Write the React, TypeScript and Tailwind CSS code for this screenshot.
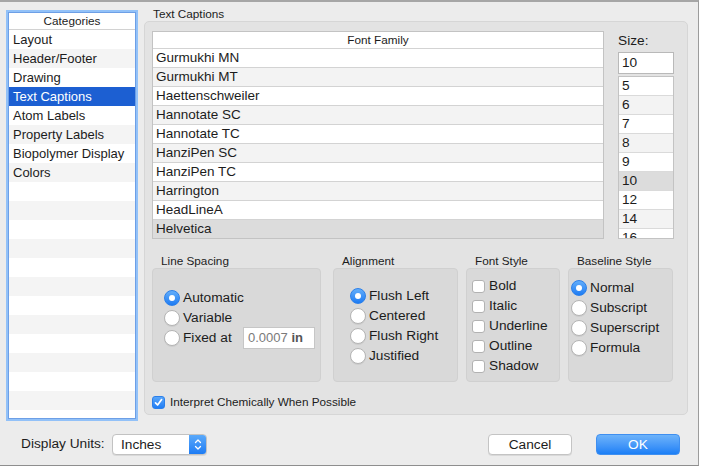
import React from 'react';

const CATEGORIES = [
  'Layout',
  'Header/Footer',
  'Drawing',
  'Text Captions',
  'Atom Labels',
  'Property Labels',
  'Biopolymer Display',
  'Colors',
];

const FONTS = [
  'Gurmukhi MN',
  'Gurmukhi MT',
  'Haettenschweiler',
  'Hannotate SC',
  'Hannotate TC',
  'HanziPen SC',
  'HanziPen TC',
  'Harrington',
  'HeadLineA',
  'Helvetica',
];

const SIZES = ['5', '6', '7', '8', '9', '10', '12', '14', '16'];

function Radio({ on }: { on?: boolean }) {
  if (on) {
    return (
      <span className="w-[16px] h-[16px] shrink-0 rounded-full bg-linear-to-b from-[#62aefa] to-[#1b7bf3] border border-[#2c80ea] flex items-center justify-center">
        <span className="w-[6px] h-[6px] rounded-full bg-white" />
      </span>
    );
  }
  return (
    <span className="w-[16px] h-[16px] shrink-0 rounded-full bg-white border border-[#b4b4b4] shadow-[0_1px_0_rgba(0,0,0,0.06)]" />
  );
}

function Check({ on }: { on?: boolean }) {
  if (on) {
    return (
      <span className="w-[13px] h-[13px] shrink-0 rounded-[3px] bg-linear-to-b from-[#58a6fa] to-[#1f7df4] border border-[#2b7fea] flex items-center justify-center">
        <svg width="9" height="9" viewBox="0 0 9 9">
          <path d="M1.5 4.8 L3.6 7 L7.6 1.6" fill="none" stroke="white" strokeWidth="1.7" strokeLinecap="round" strokeLinejoin="round" />
        </svg>
      </span>
    );
  }
  return <span className="w-[13px] h-[13px] shrink-0 rounded-[3px] bg-white border border-[#b2b2b2]" />;
}

function RadioRow({ label, on }: { label: string; on?: boolean }) {
  return (
    <div className="h-[20px] flex items-center gap-[3px]">
      <Radio on={on} />
      <span className="text-[13.7px] text-[#1c1c1c]">{label}</span>
    </div>
  );
}

function CheckRow({ label }: { label: string }) {
  return (
    <div className="h-[20px] flex items-center gap-[4px]">
      <Check />
      <span className="text-[13.7px] text-[#1c1c1c]">{label}</span>
    </div>
  );
}

function SubGroup({ title, width, children }: { title: string; width: string; children: React.ReactNode }) {
  return (
    <div className={`${width} flex flex-col`}>
      <div className="h-[14px] pl-[9px] text-[11.75px] leading-[14px] text-[#1c1c1c] whitespace-nowrap">{title}</div>
      <div className="h-[114px] rounded-[4px] bg-[#d9d9d9] border border-[#d0d0d0]">{children}</div>
    </div>
  );
}

export default function App() {
  return (
    <div className="w-[701px] h-[468px] bg-white font-['Liberation_Sans',Helvetica,Arial,sans-serif] text-[#1c1c1c]">
      <div className="w-[699px] h-[466px] bg-[#ececec] border-t-2 border-t-[#a6a6a6] border-r border-r-[#9c9c9c] border-b border-b-[#8e8e8e] flex flex-col">
        {/* main area */}
        <div className="flex pl-[8px] pt-[4px] gap-[8px] h-[413px]">
          {/* Categories list */}
          <div className="mt-[6px] w-[128px] h-[407px] bg-white border border-[#6d9fe6] shadow-[0_0_0_2px_#92c1f8] flex flex-col overflow-hidden">
            <div className="h-[17px] shrink-0 border-b border-[#d2d2d2] text-center text-[11.75px] leading-[16px]">Categories</div>
            {Array.from({ length: 21 }).map((_, i) => {
              const label = CATEGORIES[i];
              const selected = label === 'Text Captions';
              return (
                <div
                  key={i}
                  className={`h-[19px] shrink-0 pl-[4px] text-[13px] leading-[19px] whitespace-nowrap ${
                    selected ? 'bg-[#1c5fd2] text-white' : i % 2 === 1 ? 'bg-[#f4f4f4]' : 'bg-white'
                  }`}
                >
                  {label}
                </div>
              );
            })}
          </div>

          {/* Text Captions group */}
          <div className="w-[544px] flex flex-col">
            <div className="h-[15px] pl-[9px] text-[11.75px] leading-[15px]">Text Captions</div>
            <div className="h-[394px] rounded-[5px] bg-[#e3e3e3] border border-[#d6d6d6] pl-[7px] pt-[9px] flex flex-col">
              <div className="flex">
                {/* font table */}
                <div className="w-[452px] h-[208px] bg-white border border-[#c3c3c3] flex flex-col overflow-hidden">
                  <div className="h-[16px] shrink-0 text-center text-[11.75px] leading-[16px]">Font Family</div>
                  {FONTS.map((f, i) => (
                    <div
                      key={f}
                      className={`h-[19px] shrink-0 border-t border-[#d3d3d3] pl-[3px] text-[13.5px] leading-[18px] ${
                        f === 'Helvetica' ? 'bg-[#dcdcdc]' : i % 2 === 1 ? 'bg-[#f3f3f3]' : 'bg-white'
                      }`}
                    >
                      {f}
                    </div>
                  ))}
                </div>

                {/* size column */}
                <div className="ml-[14px] w-[56px] flex flex-col">
                  <div className="pt-[2px] h-[18px] text-[13.7px] leading-[16px]">Size:</div>
                  <div className="mt-[3px] h-[22px] bg-white border border-[#b9b9b9] pl-[3px] text-[13.7px] leading-[20px]">10</div>
                  <div className="mt-[2px] h-[163px] bg-white border border-[#c3c3c3] overflow-hidden">
                    {SIZES.map((s, i) => (
                      <div
                        key={s}
                        className={`h-[19px] border-b border-[#dadada] pl-[3px] text-[13.7px] leading-[18px] ${
                          s === '10' ? 'bg-[#dcdcdc]' : i % 2 === 1 ? 'bg-[#f3f3f3]' : 'bg-white'
                        }`}
                      >
                        {s}
                      </div>
                    ))}
                  </div>
                </div>
              </div>

              {/* option groups */}
              <div className="mt-[15px] flex">
                <SubGroup title="Line Spacing" width="w-[169px]">
                  <div className="pl-[11px] pt-[19px] flex flex-col">
                    <RadioRow label="Automatic" on />
                    <RadioRow label="Variable" />
                    <div className="h-[20px] flex items-center gap-[3px]">
                      <Radio />
                      <span className="w-[57px] text-[13.7px]">Fixed at</span>
                      <div className="w-[72px] h-[22px] shrink-0 bg-white border border-[#c6c6c6] pl-[4px] text-[13px] leading-[20px] whitespace-nowrap">
                        <span className="text-[#7a7a7a]">0.0007 </span>
                        <span className="text-[#555] font-bold">in</span>
                      </div>
                    </div>
                  </div>
                </SubGroup>
                <div className="w-[12px]" />
                <SubGroup title="Alignment" width="w-[125px]">
                  <div className="pl-[16px] pt-[17px] flex flex-col">
                    <RadioRow label="Flush Left" on />
                    <RadioRow label="Centered" />
                    <RadioRow label="Flush Right" />
                    <RadioRow label="Justified" />
                  </div>
                </SubGroup>
                <div className="w-[8px]" />
                <SubGroup title="Font Style" width="w-[94px]">
                  <div className="pl-[5px] pt-[7px] flex flex-col">
                    <CheckRow label="Bold" />
                    <CheckRow label="Italic" />
                    <CheckRow label="Underline" />
                    <CheckRow label="Outline" />
                    <CheckRow label="Shadow" />
                  </div>
                </SubGroup>
                <div className="w-[8px]" />
                <SubGroup title="Baseline Style" width="w-[105px]">
                  <div className="pl-[2px] pt-[9px] flex flex-col">
                    <RadioRow label="Normal" on />
                    <RadioRow label="Subscript" />
                    <RadioRow label="Superscript" />
                    <RadioRow label="Formula" />
                  </div>
                </SubGroup>
              </div>

              <div className="mt-[10px] h-[20px] flex items-center gap-[5px]">
                <Check on />
                <span className="text-[11.75px]">Interpret Chemically When Possible</span>
              </div>
            </div>
          </div>
        </div>

        {/* bottom bar */}
        <div className="mt-[19px] h-[21px] flex items-center pl-[21px] pr-[18px]">
          <span className="w-[91px] text-[13.7px]">Display Units:</span>
          <div className="w-[95px] h-[21px] flex rounded-[4px] border border-[#c2c2c2] bg-white overflow-hidden shadow-[0_1px_0_rgba(0,0,0,0.08)]">
            <span className="flex-1 pl-[8px] text-[13.7px] leading-[19px]">Inches</span>
            <span className="w-[17px] bg-linear-to-b from-[#5aa9fa] to-[#1c7cf4] flex items-center justify-center">
              <svg width="8" height="13" viewBox="0 0 8 13">
                <path d="M1.5 4.5 L4 2 L6.5 4.5 M1.5 8.5 L4 11 L6.5 8.5" fill="none" stroke="white" strokeWidth="1.3" strokeLinecap="round" strokeLinejoin="round" />
              </svg>
            </span>
          </div>
          <div className="flex-1" />
          <button className="w-[84px] h-[21px] rounded-[4px] bg-white border border-[#c4c4c4] shadow-[0_1px_0_rgba(0,0,0,0.08)] text-[13.7px] leading-[19px]">
            Cancel
          </button>
          <button className="ml-[24px] w-[84px] h-[21px] rounded-[4px] bg-linear-to-b from-[#6db3fa] to-[#1a7ff6] border border-[#3f8ff0] text-white text-[13.7px] leading-[19px]">
            OK
          </button>
        </div>
      </div>
    </div>
  );
}
